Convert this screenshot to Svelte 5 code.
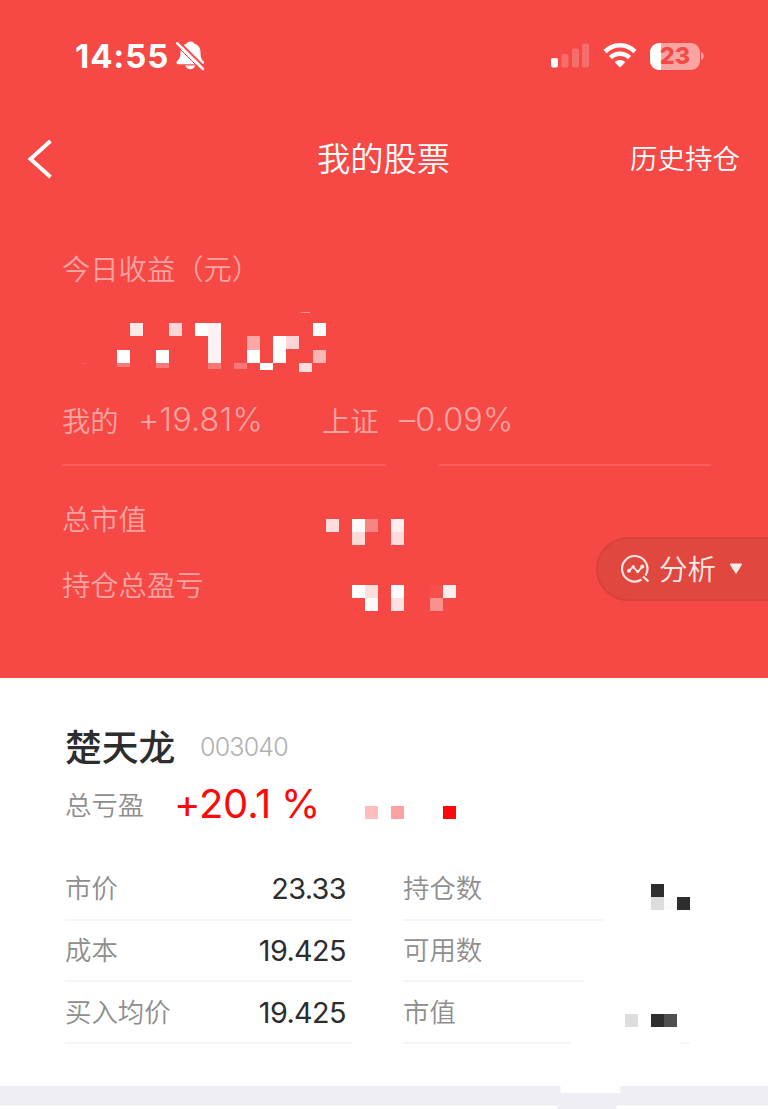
<script lang="ts">
  type Cell = [x: number, y: number, w: number, h: number, opacity: number];

  // masked amounts, in the coordinates of each svg's viewBox
  const profitCells: Cell[] = [
    [68, 15, 13, 13, 0.87],
    [107, 15, 13, 13, 0.77],
    [133, 15, 13, 13, 1],
    [146, 15, 13, 40, 0.93],
    [251, 15, 13, 13, 1],
    [185, 28, 13, 14, 0.53],
    [211, 28, 13, 27, 1],
    [224, 28, 13, 13, 0.77],
    [55, 42, 13, 13, 1],
    [94, 42, 13, 13, 1],
    [185, 42, 13, 13, 1],
    [251, 42, 13, 13, 0.6],
    [55, 55, 13, 4, 0.26],
    [94, 55, 13, 5, 0.26],
    [146, 55, 13, 6, 0.26],
    [172, 55, 13, 6, 0.26],
    [198, 55, 13, 7, 1],
    [237, 55, 13, 9, 0.82],
    [239, 4, 9, 1, 0.4],
    [19, 55, 5, 1, 0.12],
  ];

  const marketCells: Cell[] = [
    [0, 0, 13, 13, 0.82],
    [26, 0, 13, 13, 0.97],
    [39, 0, 13, 13, 0.33],
    [26, 13, 13, 13, 0.8],
    [65, 0, 13, 13, 0.91],
    [65, 13, 13, 13, 0.81],
  ];

  const totalCells: Cell[] = [
    [26, 0, 13, 13, 1],
    [39, 0, 13, 13, 0.82],
    [39, 13, 13, 13, 0.98],
    [65, 0, 13, 13, 1],
    [65, 13, 13, 13, 0.84],
    [104, 0, 13, 13, 0.03],
    [104, 13, 13, 13, 0.4],
    [117, 0, 13, 13, 0.9],
  ];

  const gainCells: Cell[] = [
    [0, 0, 13, 13, 0.27],
    [26, 0, 13, 13, 0.38],
    [78, 0, 13, 13, 1],
  ];

  const prices = [
    { label: '市价', value: '23.33' },
    { label: '成本', value: '19.425' },
    { label: '买入均价', value: '19.425' },
  ];

  const amounts: { label: string; line: number; cells: Cell[] }[] = [
    {
      label: '持仓数',
      line: 201,
      cells: [
        [26, 25, 13, 13, 1],
        [26, 38, 13, 13, 0.17],
        [39, 38, 13, 13, 0.02],
        [52, 38, 13, 13, 1],
      ],
    },
    { label: '可用数', line: 181, cells: [] },
    {
      label: '市值',
      line: 167,
      cells: [
        [0, 32, 13, 13, 0.16],
        [26, 32, 13, 13, 1],
        [39, 32, 13, 13, 0.84],
        [55, 60, 10, 2, 0.04],
      ],
    },
  ];
</script>

{#snippet mosaic(cells: Cell[], width: number, height: number)}
  <svg class="mosaic" {width} {height} viewBox="0 0 {width} {height}" shape-rendering="crispEdges">
    {#each cells as [x, y, w, h, opacity]}
      <rect {x} {y} width={w} height={h} {opacity} />
    {/each}
  </svg>
{/snippet}

<main>
  <section class="hero">
    <div class="status">
      <span class="time">14:55</span>
      <svg class="bell" width="30" height="30" viewBox="0 0 30 30">
        <path
          d="M15.500.500c-2.300 0-3.500 1-4 2.300C7.500 4 5.500 7.500 5.500 11.700c0 4.600-1.200 6.200-3.500 8.500-1.200 1.300-.5 3 1.300 3h24c1.800 0 2.400-1.700 1.200-3-2.300-2.300-3-3.900-3-8.500 0-4.200-2-7.700-6-8.900-.5-1.300-1.700-2.300-4-2.300zM10.500 24.500h9.600c-.6 2.600-2.500 3.800-4.800 3.800s-4.200-1.200-4.800-3.800z"
          fill="#fff"
        />
        <path d="M4 .8L30.500 27.300" stroke="#f64945" stroke-width="2.200" />
        <path d="M2.300 2.300L28 28" stroke="#fff" stroke-width="2.600" stroke-linecap="round" />
        <path d="M1 4L26 29" stroke="#f64945" stroke-width="1" />
      </svg>
      <svg class="signal" width="38" height="26" viewBox="0 0 38 26" fill="#fff">
        <rect x="0" y="15" width="7" height="9.500" rx="2" />
        <rect x="10.500" y="11" width="7" height="13.500" rx="2" opacity=".2" />
        <rect x="21" y="5.500" width="7" height="19" rx="2" opacity=".2" />
        <rect x="31" y="0.500" width="7" height="24" rx="2" opacity=".2" />
      </svg>
      <svg class="wifi" width="34" height="26" viewBox="0 0 34 26">
        <g fill="none" stroke="#fff" stroke-width="4.500">
          <path d="M2 8.700C10.500 .2 23.500 .2 32 8.700" />
          <path d="M7.500 14.600c5.300-5.200 13.700-5.200 19 0" />
        </g>
        <path d="M17 24.500l-5.300-5.300c3-2.900 7.600-2.900 10.600 0z" fill="#fff" />
      </svg>
      <div class="battery"><span>23</span></div>
      <svg class="cap" width="3" height="10" viewBox="0 0 3 10">
        <path d="M0 1c3.500 1 3.500 7 0 8z" fill="#fff" opacity=".5" />
      </svg>
    </div>

    <nav>
      <svg width="26" height="40" viewBox="0 0 26 40">
        <path d="M23.500 2L3.500 20l20 18" fill="none" stroke="#fff" stroke-width="3.900" />
      </svg>
      <h1>我的股票</h1>
      <span class="history">历史持仓</span>
    </nav>

    <div class="today">今日收益（元）</div>
    <div class="profit">{@render mosaic(profitCells, 270, 72)}</div>

    <div class="compare">
      <span class="mine">我的</span>
      <span class="percent">+19.81%</span>
      <span class="index">上证</span>
      <span class="percent">–0.09%</span>
    </div>
    <div class="rules"><i></i><i></i></div>

    <div class="total market">
      <span>总市值</span>
      {@render mosaic(marketCells, 130, 26)}
    </div>
    <div class="total">
      <span>持仓总盈亏</span>
      {@render mosaic(totalCells, 130, 26)}
    </div>

    <button class="analysis">
      <svg width="30" height="30" viewBox="0 0 30 30" fill="none" stroke="#ffe9e7" stroke-width="2.200">
        <path d="M20.500 25.500A12.700 12.700 0 1 1 24.500 21.500M22 22.500l5.500 5" />
        <path d="M8 16.800l4-4 4.800 5 5-5.500" stroke-width="1.800" />
        <g fill="#ffe9e7" stroke="none">
          <circle cx="8" cy="16.800" r="2" />
          <circle cx="12.300" cy="12.700" r="1.600" />
          <circle cx="16.700" cy="17.600" r="1.600" />
          <circle cx="21.300" cy="12.500" r="2" />
        </g>
      </svg>
      <span>分析</span>
      <svg class="arrow" width="14" height="12" viewBox="0 0 14 12">
        <path d="M1.200 1h11.600L7 10.500z" fill="#ffe9e7" stroke="#ffe9e7" stroke-linejoin="round" />
      </svg>
    </button>
  </section>

  <section class="stock">
    <div class="name">
      <h2>楚天龙</h2>
      <span>003040</span>
    </div>
    <div class="gain">
      <span class="label">总亏盈</span>
      <span class="rate">+20.1<b>%</b></span>
      {@render mosaic(gainCells, 92, 13)}
    </div>

    <div class="details">
      <div class="prices">
        {#each prices as { label, value }}
          <div class="row">
            <span class="label">{label}</span>
            <span class="value">{value}</span>
          </div>
        {/each}
      </div>
      <div class="amounts">
        {#each amounts as { label, line, cells }}
          <div class="row">
            <span class="label">{label}</span>
            {@render mosaic(cells, 66, 60)}
            <i style="width: {line}px"></i>
          </div>
        {/each}
      </div>
    </div>
  </section>

  <svg class="divider" width="768" height="24" viewBox="0 0 768 24">
    <path d="M0 0H560.500V7H620.500V0H768V19.500H616.500V23H557.500V19.500H0z" fill="#efeef4" />
  </svg>
</main>

<style>
  :global(body) {
    margin: 0;
    background: #fff;
  }

  main {
    width: 768px;
    height: 1109px;
    overflow: hidden;
    font-family: Inter, 'Noto Sans CJK SC', sans-serif;
    font-weight: 350;
    white-space: nowrap;
  }

  h1,
  h2 {
    margin: 0;
  }

  svg {
    display: block;
    flex: none;
  }

  .mosaic {
    fill: currentColor;
    overflow: visible;
  }

  .hero {
    position: relative;
    box-sizing: border-box;
    height: 678px;
    background: #f64945;
    color: #fff;
  }

  .status {
    box-sizing: border-box;
    height: 112px;
    padding: 0 64px 0 75px;
    display: flex;
    align-items: center;
  }

  .time {
    width: 100px;
    font-size: 33px;
    font-weight: 700;
    letter-spacing: 0.9px;
  }

  .signal {
    margin-left: auto;
  }

  .wifi {
    margin: 0 13px 0 14px;
  }

  .battery {
    width: 50px;
    height: 27px;
    border-radius: 9px;
    background: linear-gradient(90deg, #fff 11px, #fba4a2 11px);
    color: #f64945;
    font-size: 23.5px;
    font-weight: 800;
    line-height: 26px;
    text-align: center;
  }

  .cap {
    margin-left: 1px;
  }

  nav {
    height: 94px;
    padding: 0 28px 0 27px;
    display: grid;
    grid-template-columns: 1fr auto 1fr;
    align-items: center;
  }

  h1 {
    padding-bottom: 5px;
    font-size: 33.3px;
    font-weight: 350;
  }

  .history {
    padding-bottom: 4px;
    justify-self: end;
    font-size: 27.5px;
  }

  .today {
    height: 102px;
    padding-left: 62px;
    font-family: 'Noto Sans CJK SC', sans-serif;
    font-size: 28.3px;
    line-height: 123px;
    color: #fba4a2;
  }

  .profit {
    padding-left: 62px;
  }

  .compare {
    box-sizing: border-box;
    height: 84px;
    padding: 0 0 6px 62px;
    display: flex;
    align-items: center;
    font-size: 28.3px;
    color: #fba4a2;
  }

  .mine {
    width: 76px;
  }

  .percent {
    width: 184px;
    font-size: 32.3px;
    font-weight: 300;
    letter-spacing: 0.2px;
  }

  .index {
    width: 77px;
  }

  .rules {
    padding: 0 57px 0 62px;
    display: flex;
    justify-content: space-between;
  }

  .rules i {
    width: 324px;
    height: 2px;
    background: #f85d59;
  }

  .rules i + i {
    width: 272px;
  }

  .total {
    height: 66px;
    padding-left: 62px;
    display: flex;
    align-items: center;
    font-size: 28.3px;
  }

  .market {
    margin-top: 20px;
  }

  .total span {
    width: 264px;
    padding-bottom: 4px;
    color: #fba4a2;
  }

  .total svg {
    margin-top: 25px;
  }

  .analysis {
    position: absolute;
    top: 537px;
    right: -2px;
    box-sizing: border-box;
    width: 174px;
    height: 64px;
    padding: 0 0 0 23px;
    display: flex;
    align-items: center;
    border: 2px solid #d8423d;
    border-radius: 32px 0 0 32px;
    background: #df473f;
    color: #ffe9e7;
    font: inherit;
    font-size: 28.5px;
  }

  .analysis span {
    margin: 0 13px 0 8px;
    padding-bottom: 4px;
  }

  .stock {
    box-sizing: border-box;
    height: 407.5px;
    padding: 41px 65px 0;
  }

  .name {
    height: 56px;
    display: flex;
    align-items: center;
  }

  h2 {
    width: 135px;
    padding-bottom: 4px;
    font-size: 36.8px;
    font-weight: 500;
    color: #2d2d2d;
  }

  .name span {
    font-size: 25px;
    font-weight: 300;
    color: #b0b0b0;
    letter-spacing: -0.8px;
  }

  .label {
    font-size: 26.4px;
    color: #8e8e8e;
  }

  .gain {
    height: 56px;
    display: flex;
    align-items: center;
    color: #fb0a0a;
  }

  .gain .label {
    width: 109px;
  }

  .rate {
    width: 191px;
    font-size: 40px;
    font-weight: 400;
    letter-spacing: -0.2px;
  }

  .rate b {
    margin-left: 10px;
    font-weight: 400;
  }

  .gain svg {
    margin-top: 18px;
  }

  .details {
    margin-top: 28px;
    display: flex;
    gap: 51px;
  }

  .prices {
    width: 287px;
  }

  .amounts {
    width: 288px;
  }

  .row {
    position: relative;
    box-sizing: border-box;
    height: 61.7px;
    display: flex;
    align-items: center;
    justify-content: space-between;
  }

  .row .label {
    padding-bottom: 4px;
  }

  .prices .row {
    padding-right: 6px;
    border-bottom: 2px solid #f5f5f5;
  }

  .value {
    font-size: 28.8px;
    font-weight: 400;
    letter-spacing: -0.6px;
    color: #2d2d2d;
  }

  .amounts .row {
    padding-bottom: 2px;
    color: #2d2d2d;
  }

  .amounts i {
    position: absolute;
    left: 0;
    bottom: 0;
    height: 2px;
    background: #f5f5f5;
  }

  .divider {
    width: 768px;
  }
</style>
